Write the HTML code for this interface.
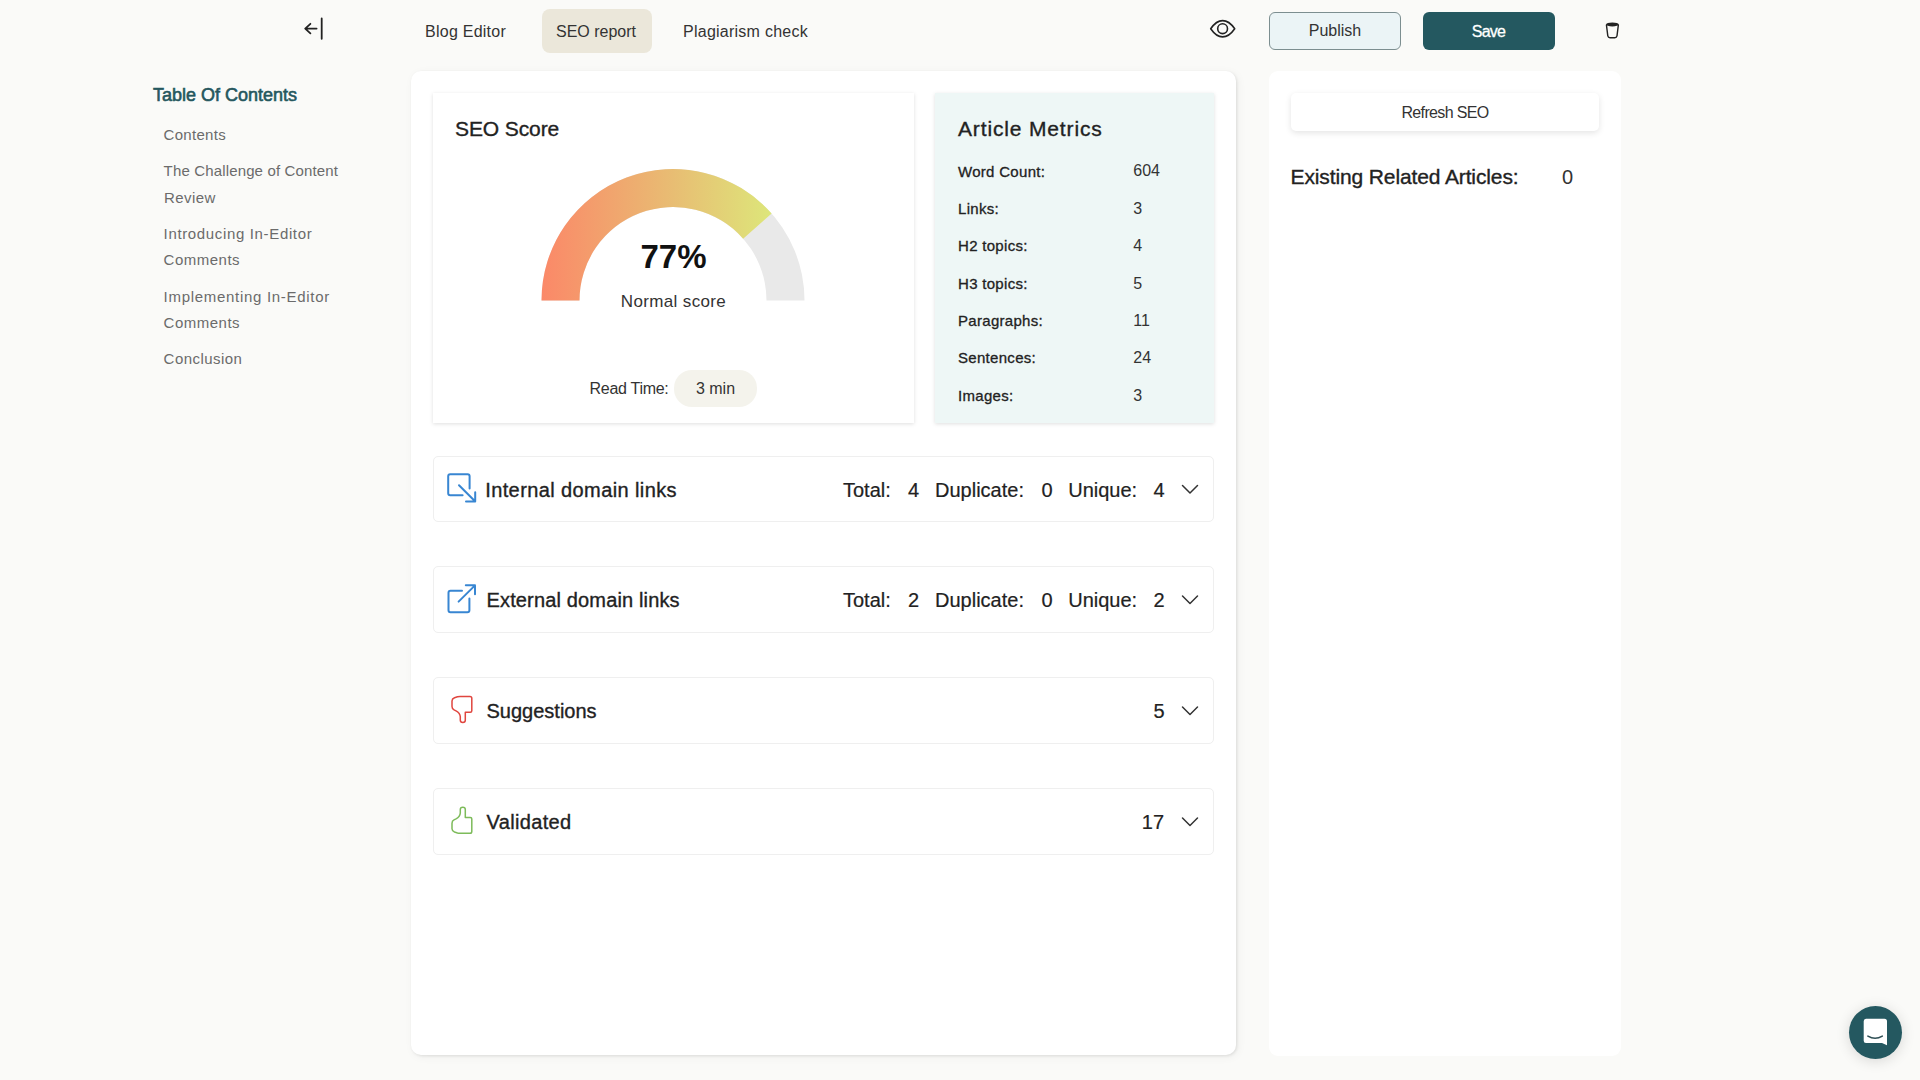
<!DOCTYPE html>
<html><head><meta charset="utf-8">
<style>
*{box-sizing:border-box;margin:0;padding:0}
html,body{width:1920px;height:1080px;overflow:hidden}
body{background:#fafaf8;font-family:"Liberation Sans",sans-serif;color:#222;position:relative}
.a{position:absolute;white-space:nowrap;line-height:1}
.med{-webkit-text-stroke:0.35px currentColor}
.card{position:absolute;background:#fff}
</style></head><body>

<!-- top bar -->
<svg class="a" style="left:300px;top:14px" width="28" height="30" viewBox="0 0 28 30">
  <path d="M5.2 14.6 H16.6 M10.4 9.8 L5.2 14.6 L10.4 19.4 M21.7 4.4 V24.8" fill="none" stroke="#222" stroke-width="1.8" stroke-linecap="round" stroke-linejoin="round"/>
</svg>

<div class="a" style="left:425px;top:23.5px;font-size:16px;color:#333;letter-spacing:0.25px">Blog Editor</div>
<div class="a" style="left:542px;top:9px;width:110px;height:44px;background:#ebe7da;border-radius:8px"></div>
<div class="a" style="left:556px;top:24.1px;font-size:16px;color:#333">SEO report</div>
<div class="a" style="left:683px;top:23.6px;font-size:16px;color:#333;letter-spacing:0.25px">Plagiarism check</div>

<svg class="a" style="left:1208px;top:18px" width="30" height="22" viewBox="0 0 30 22">
  <path d="M2.7 10.7 C6.5 5.2 10.2 2.6 14.6 2.6 C19 2.6 22.9 5.2 26.7 10.7 C22.9 16.2 19 18.9 14.6 18.9 C10.2 18.9 6.5 16.2 2.7 10.7 Z" fill="none" stroke="#222" stroke-width="1.6" stroke-linejoin="round"/>
  <circle cx="14.6" cy="10.7" r="4.9" fill="none" stroke="#222" stroke-width="1.6"/>
</svg>

<div class="a" style="left:1269px;top:12px;width:132px;height:38px;background:#ebf4f6;border:1px solid #7c8e90;border-radius:6px"></div>
<div class="a" style="left:1269px;width:132px;text-align:center;top:23.3px;font-size:16px;color:#333">Publish</div>
<div class="a" style="left:1423px;top:12px;width:132px;height:38px;background:#245860;border-radius:6px"></div>
<div class="a" style="left:1423px;width:132px;text-align:center;top:24px;font-size:16px;color:#fff;-webkit-text-stroke:0.3px #fff;letter-spacing:-0.8px;margin-left:-0.6px">Save</div>

<svg class="a" style="left:1602px;top:20px" width="20" height="20" viewBox="0 0 20 20">
  <ellipse cx="10.4" cy="4.4" rx="6.4" ry="2" fill="#222"/>
  <path d="M4.4 4.6 L5.8 15.8 Q6.2 17.7 8 17.7 H12.8 Q14.6 17.7 15 15.8 L16.4 4.6" fill="none" stroke="#222" stroke-width="1.4" stroke-linejoin="round"/>
</svg>

<!-- TOC -->
<div class="a" style="left:153px;top:85.8px;font-size:18px;color:#25575e;-webkit-text-stroke:0.6px #25575e;letter-spacing:0px">Table Of Contents</div>
<div class="a" style="left:163.6px;letter-spacing:0.3px;top:127.3px;font-size:15px;color:#6b6b6b">Contents</div>
<div class="a" style="left:163.6px;letter-spacing:0.15px;top:163.3px;font-size:15px;color:#6b6b6b">The Challenge of Content</div>
<div class="a" style="left:163.6px;letter-spacing:0.4px;top:190.3px;font-size:15px;color:#6b6b6b;margin-left:0.5px">Review</div>
<div class="a" style="left:163.6px;letter-spacing:0.65px;top:225.8px;font-size:15px;color:#6b6b6b">Introducing In-Editor</div>
<div class="a" style="left:163.6px;letter-spacing:0.5px;top:252.3px;font-size:15px;color:#6b6b6b">Comments</div>
<div class="a" style="left:163.6px;letter-spacing:0.7px;top:289.3px;font-size:15px;color:#6b6b6b">Implementing In-Editor</div>
<div class="a" style="left:163.6px;letter-spacing:0.5px;top:315.3px;font-size:15px;color:#6b6b6b">Comments</div>
<div class="a" style="left:163.6px;letter-spacing:0.45px;top:351.3px;font-size:15px;color:#6b6b6b">Conclusion</div>

<!-- main card -->
<div class="card" style="left:411px;top:71px;width:825px;height:984px;border-radius:10px;box-shadow:1px 1px 3px rgba(0,0,0,0.09),2px 2px 10px rgba(0,0,0,0.05)"></div>

<!-- SEO score card -->
<div class="card" style="left:433px;top:93px;width:481px;height:330px;box-shadow:0 1px 4px rgba(0,0,0,0.13)"></div>
<div class="a med" style="left:455px;top:118px;font-size:21px;color:#222;letter-spacing:-0.1px">SEO Score</div>

<svg class="a" style="left:533px;top:160px" width="280" height="150" viewBox="0 0 280 150">
  <defs>
    <linearGradient id="g" x1="8" y1="0" x2="272" y2="0" gradientUnits="userSpaceOnUse">
      <stop offset="0" stop-color="#fb8868"/>
      <stop offset="0.5" stop-color="#e8bd73"/>
      <stop offset="0.88" stop-color="#dde77a"/>
      <stop offset="1" stop-color="#dde77a"/>
    </linearGradient>
  </defs>
  <!-- center (140,140.5), outer r 132, inner r 93 -->
  <path d="M8.5 140.5 A131.5 131.5 0 0 1 271.5 140.5 L233.5 140.5 A93.5 93.5 0 0 0 46.5 140.5 Z" fill="#e9e9e9"/>
  <path d="M8.5 140.5 A131.5 131.5 0 0 1 238.64 53.54 L210.14 78.67 A93.5 93.5 0 0 0 46.5 140.5 Z" fill="url(#g)"/>
</svg>
<div class="a" style="left:433px;width:481px;text-align:center;top:240.1px;font-size:33px;font-weight:bold;color:#111">77%</div>
<div class="a" style="left:433px;width:481px;text-align:center;top:292.5px;font-size:17px;color:#333;letter-spacing:0.35px">Normal score</div>

<div class="a" style="left:589.6px;top:380.5px;font-size:16px;color:#333;letter-spacing:-0.3px">Read Time:</div>
<div class="a" style="left:674px;top:370px;width:83px;height:37px;background:#f4f3ec;border-radius:18px"></div>
<div class="a" style="left:674px;width:83px;text-align:center;top:380.5px;font-size:16px;color:#333">3 min</div>

<!-- Article metrics -->
<div class="card" style="left:935px;top:93px;width:279px;height:330px;background:#eef7f6;box-shadow:0 1px 4px rgba(0,0,0,0.13)"></div>
<div class="a med" style="left:958px;top:118.2px;font-size:21px;color:#222;letter-spacing:0.85px">Article Metrics</div>

<div class="a" style="left:958px;letter-spacing:0.3px;margin-top:-0.4px;top:163.9px;font-size:15px;color:#222;-webkit-text-stroke:0.3px #222">Word Count:</div>
<div class="a" style="left:1133.3px;top:163.1px;font-size:16px;color:#333">604</div>
<div class="a" style="left:958px;letter-spacing:0.3px;margin-top:-0.4px;top:201.3px;font-size:15px;color:#222;-webkit-text-stroke:0.3px #222">Links:</div>
<div class="a" style="left:1133.3px;top:200.5px;font-size:16px;color:#333">3</div>
<div class="a" style="left:958px;letter-spacing:0.3px;margin-top:-0.4px;top:238.5px;font-size:15px;color:#222;-webkit-text-stroke:0.3px #222">H2 topics:</div>
<div class="a" style="left:1133.3px;top:237.7px;font-size:16px;color:#333">4</div>
<div class="a" style="left:958px;letter-spacing:0.3px;margin-top:-0.4px;top:276.4px;font-size:15px;color:#222;-webkit-text-stroke:0.3px #222">H3 topics:</div>
<div class="a" style="left:1133.3px;top:275.6px;font-size:16px;color:#333">5</div>
<div class="a" style="left:958px;letter-spacing:0.3px;margin-top:-0.4px;top:313.7px;font-size:15px;color:#222;-webkit-text-stroke:0.3px #222">Paragraphs:</div>
<div class="a" style="left:1133.3px;top:312.9px;font-size:16px;color:#333">11</div>
<div class="a" style="left:958px;letter-spacing:0.3px;margin-top:-0.4px;top:350.4px;font-size:15px;color:#222;-webkit-text-stroke:0.3px #222">Sentences:</div>
<div class="a" style="left:1133.3px;top:349.6px;font-size:16px;color:#333">24</div>
<div class="a" style="left:958px;letter-spacing:0.3px;margin-top:-0.4px;top:388.3px;font-size:15px;color:#222;-webkit-text-stroke:0.3px #222">Images:</div>
<div class="a" style="left:1133.3px;top:387.5px;font-size:16px;color:#333">3</div>

<!-- accordions -->
<div class="card" style="left:433px;top:456px;width:781px;height:66px;border:1px solid #efefef;border-radius:5px"></div>
<div class="card" style="left:433px;top:566px;width:781px;height:67px;border:1px solid #efefef;border-radius:5px"></div>
<div class="card" style="left:433px;top:677px;width:781px;height:67px;border:1px solid #efefef;border-radius:5px"></div>
<div class="card" style="left:433px;top:788px;width:781px;height:67px;border:1px solid #efefef;border-radius:5px"></div>

<div class="a med" style="left:485.2px;top:480.2px;font-size:20px;color:#222;letter-spacing:0.4px">Internal domain links</div>
<div class="a" style="left:843px;top:480.2px;font-size:20px;color:#222;-webkit-text-stroke:0.2px #222">Total:</div>
<div class="a" style="left:908px;top:480.2px;font-size:20px;color:#222;-webkit-text-stroke:0.2px #222">4</div>
<div class="a" style="left:935px;top:480.2px;font-size:20px;color:#222;-webkit-text-stroke:0.2px #222">Duplicate:</div>
<div class="a" style="left:1041.4px;top:480.2px;font-size:20px;color:#222;-webkit-text-stroke:0.2px #222">0</div>
<div class="a" style="left:1068.2px;top:480.2px;font-size:20px;color:#222;-webkit-text-stroke:0.2px #222">Unique:</div>
<div class="a" style="left:1153.4px;top:480.2px;font-size:20px;color:#222;-webkit-text-stroke:0.2px #222">4</div>
<div class="a med" style="left:486.5px;top:590.1px;font-size:20px;color:#222;letter-spacing:0.15px">External domain links</div>
<div class="a" style="left:843px;top:590.1px;font-size:20px;color:#222;-webkit-text-stroke:0.2px #222">Total:</div>
<div class="a" style="left:908px;top:590.1px;font-size:20px;color:#222;-webkit-text-stroke:0.2px #222">2</div>
<div class="a" style="left:935px;top:590.1px;font-size:20px;color:#222;-webkit-text-stroke:0.2px #222">Duplicate:</div>
<div class="a" style="left:1041.4px;top:590.1px;font-size:20px;color:#222;-webkit-text-stroke:0.2px #222">0</div>
<div class="a" style="left:1068.2px;top:590.1px;font-size:20px;color:#222;-webkit-text-stroke:0.2px #222">Unique:</div>
<div class="a" style="left:1153.4px;top:590.1px;font-size:20px;color:#222;-webkit-text-stroke:0.2px #222">2</div>
<div class="a med" style="left:486.5px;top:701.1px;font-size:20px;color:#222">Suggestions</div>
<div class="a" style="left:1153.4px;top:701.1px;font-size:20px;color:#222;-webkit-text-stroke:0.2px #222">5</div>
<div class="a med" style="left:486.5px;top:812.1px;font-size:20px;color:#222;letter-spacing:0.35px">Validated</div>
<div class="a" style="left:1141.8px;top:812.1px;font-size:20px;color:#222;-webkit-text-stroke:0.2px #222">17</div>

<!-- right panel -->
<div class="card" style="left:1269px;top:70.5px;width:352px;height:985px;border-radius:9px"></div>
<div class="card" style="left:1291px;top:92.5px;width:308px;height:38px;border-radius:5px;box-shadow:0 2px 6px rgba(0,0,0,0.11)"></div>
<div class="a" style="left:1291px;width:308px;text-align:center;top:104.5px;font-size:16px;color:#333;letter-spacing:-0.65px">Refresh SEO</div>
<div class="a med" style="left:1290.5px;top:166.3px;font-size:21px;color:#222;letter-spacing:-0.12px">Existing Related Articles:</div>
<div class="a" style="left:1562px;top:167px;font-size:20px;color:#333">0</div>

<!-- chat -->
<div class="a" style="left:1849px;top:1006px;width:53px;height:53px;border-radius:50%;background:#245860;box-shadow:0 2px 14px rgba(0,0,0,0.14)"></div>
<svg class="a" style="left:1862px;top:1017px" width="28" height="30" viewBox="0 0 28 30">
  <path d="M4 1.7 H22.5 Q25 1.7 25 4.2 V28.3 L20 26 H4 Q1.7 26 1.7 23.7 V4.2 Q1.7 1.7 4 1.7 Z" fill="#fff"/>
  <path d="M5.9 19.1 Q13.1 23.4 20.3 19.1" fill="none" stroke="#2f4f55" stroke-width="1.6" stroke-linecap="round"/>
</svg>

<svg class="a" style="left:0;top:0;pointer-events:none" width="1920" height="1080" viewBox="0 0 1920 1080">
  <g fill="none" stroke="#3886d2" stroke-width="2" stroke-linecap="round" stroke-linejoin="round">
    <path d="M462.6 495.3 H450.2 Q448.2 495.3 448.2 493.3 V476.2 Q448.2 474.2 450.2 474.2 H467.6 Q469.6 474.2 469.6 476.2 V488.4"/>
    <path d="M459 485.2 L475 501.2 M466 501.4 H475.2 V492.3"/>
    <path d="M462 590.8 H450.5 Q448.5 590.8 448.5 592.8 V610.2 Q448.5 612.2 450.5 612.2 H467.4 Q469.4 612.2 469.4 610.2 V598.4"/>
    <path d="M458.6 601.6 L475 585.4 M465.8 585.2 H475 V594.3"/>
  </g>
  <path d="M452 701 Q452 698.8 454.5 697.8 L457.5 696.8 Q458.5 696.5 460 696.5 H470 Q471.8 696.5 471.8 698.3 V710.8 Q471.8 712.3 470.3 712.3 H465.3 V720.3 Q465.3 722.5 462.8 722.5 Q460.3 722.5 460.3 720.3 V716.8 Q460 713 456 710.8 L454 709.8 Q452 708.8 452 706.5 Z" fill="none" stroke="#e0463f" stroke-width="1.5" stroke-linejoin="round"/>
  <g transform="translate(0,1529.75) scale(1,-1)"><path d="M452 701 Q452 698.8 454.5 697.8 L457.5 696.8 Q458.5 696.5 460 696.5 H470 Q471.8 696.5 471.8 698.3 V710.8 Q471.8 712.3 470.3 712.3 H465.3 V720.3 Q465.3 722.5 462.8 722.5 Q460.3 722.5 460.3 720.3 V716.8 Q460 713 456 710.8 L454 709.8 Q452 708.8 452 706.5 Z" fill="none" stroke="#7dbb5a" stroke-width="1.5" stroke-linejoin="round"/></g>
  <g fill="none" stroke="#333" stroke-width="1.5" stroke-linecap="round" stroke-linejoin="round">
    <path d="M1182.5 485.5 L1190 493 L1197.5 485.5"/>
    <path d="M1182.5 596 L1190 603.5 L1197.5 596"/>
    <path d="M1182.5 707 L1190 714.5 L1197.5 707"/>
    <path d="M1182.5 818 L1190 825.5 L1197.5 818"/>
  </g>
</svg>
</body></html>
